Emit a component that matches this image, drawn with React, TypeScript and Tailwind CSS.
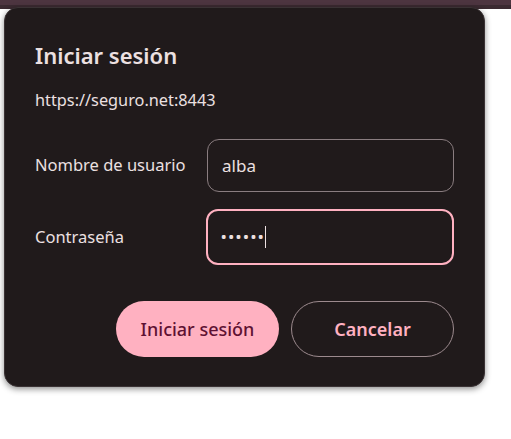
export default function App() {
  return (
    <div className="w-[511px] h-[439px] bg-white relative overflow-hidden font-['Noto_Sans',sans-serif]">
      {/* top window strip */}
      <div className="h-[9px] bg-[#3b2a31] border-t-[5px] border-[#4d3540]" />

      {/* dialog */}
      <div className="absolute left-[4px] top-[7px] w-[481px] h-[380px] bg-[#201a1b] rounded-[14px] shadow-[0_2px_6px_rgba(0,0,0,0.45)] border border-[#3a3234] px-[30px] pt-[32px]">
        <h2 className="text-[22px] leading-[30px] font-semibold text-[#ece0e1]">
          Iniciar sesión
        </h2>
        <p className="mt-[19px] text-[16.3px] leading-[22px] text-[#ece0e1]">
          https://seguro.net:8443
        </p>

        <div className="mt-[28px] flex flex-col gap-[17px]">
          <div className="flex items-center">
            <span className="w-[172px] text-[16.5px] text-[#ece0e1]">Nombre de usuario</span>
            <div className="w-[247px] h-[53px] rounded-[12px] border border-[#8a7d80] flex items-center px-[14px] text-[17px] text-[#ece0e1]">
              alba
            </div>
          </div>
          <div className="flex items-center">
            <span className="w-[172px] text-[16.5px] text-[#ece0e1]">Contraseña</span>
            <div className="w-[249px] h-[56px] -ml-[1px] rounded-[12px] border-[2px] border-[#ffb1c1] flex items-center px-[13px] text-[17px] tracking-[1px] text-[#ece0e1]">
              ••••••
              <span className="w-[1px] h-[22px] bg-[#ece0e1]" />
            </div>
          </div>
        </div>

        <div className="mt-[36px] flex justify-end gap-[12px]">
          <button className="w-[163px] h-[56px] rounded-full bg-[#ffb1c1] text-[#5e1133] text-[18px] font-medium">
            Iniciar sesión
          </button>
          <button className="w-[163px] h-[56px] rounded-full border border-[#9c8a8e] text-[#ffb1c1] text-[18px] font-semibold">
            Cancelar
          </button>
        </div>
      </div>
    </div>
  );
}
